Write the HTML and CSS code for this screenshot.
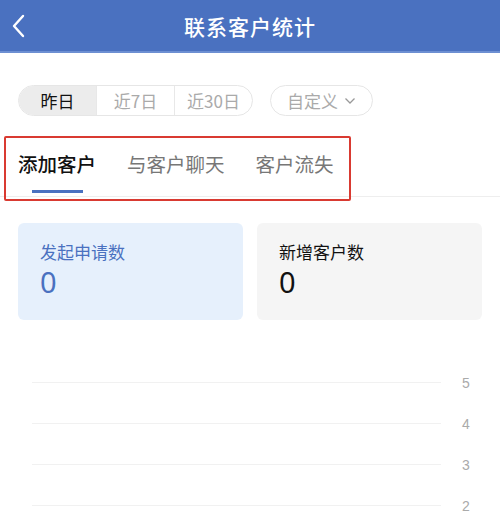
FILE: index.html
```html
<!DOCTYPE html>
<html lang="zh">
<head>
<meta charset="utf-8">
<link rel="stylesheet" href="styles.css">
</head>
<body>
<header class="topbar">
  <svg class="back" width="14" height="24" viewBox="0 0 14 24"><path d="M12 2 L3 12 L12 22" fill="none" stroke="#fff" stroke-width="2.4" stroke-linecap="round" stroke-linejoin="round"/></svg>
  <h1 class="title">联系客户统计</h1>
</header>
<div class="filters">
  <div class="seg">
    <span class="seg-item active">昨日</span>
    <span class="seg-item">近7日</span>
    <span class="seg-item">近30日</span>
  </div>
  <div class="custom">自定义
    <svg width="12" height="8" viewBox="0 0 12 8"><path d="M1.5 1.5 L6 6 L10.5 1.5" fill="none" stroke="#999" stroke-width="1.3"/></svg>
  </div>
</div>
<div class="tabs-wrap">
  <div class="tabs">
    <div class="tab active">添加客户<i class="bar"></i></div>
    <div class="tab">与客户聊天</div>
    <div class="tab">客户流失</div>
  </div>
</div>
<div class="cards">
  <div class="card blue"><div class="label">发起申请数</div><div class="value">0</div></div>
  <div class="card gray"><div class="label">新增客户数</div><div class="value">0</div></div>
</div>
<div class="chart">
  <div class="row"><span class="line"></span><span class="tick">5</span></div>
  <div class="row"><span class="line"></span><span class="tick">4</span></div>
  <div class="row"><span class="line"></span><span class="tick">3</span></div>
  <div class="row"><span class="line"></span><span class="tick">2</span></div>
</div>
</body>
</html>
```
FILE: styles.css
```css
* { box-sizing: border-box; }
html, body { margin: 0; padding: 0; background: #fff; }
body {
  width: 500px; height: 519px; overflow: hidden;
  font-family: "Noto Sans CJK SC", "Noto Sans", sans-serif;
  color: #222;
}
.topbar {
  height: 53px;
  background: #4a71c0;
  border-bottom: 2px solid #6d8fd2;
  position: relative;
  display: flex; align-items: center; justify-content: center;
}
.back { position: absolute; left: 11px; top: 14px; }
.title {
  margin: 0; color: #fff; font-size: 21px; font-weight: 500; letter-spacing: 1px;
}
.filters {
  display: flex; align-items: center; gap: 17px;
  padding: 32px 0 0 18px;
}
.seg {
  display: flex; height: 31px; width: 235px;
  border: 1px solid #e6e6e6; border-radius: 16px; overflow: hidden;
}
.seg-item {
  flex: 1; display: flex; align-items: center; justify-content: center;
  font-size: 17px; color: #aaa;
}
.seg-item + .seg-item { border-left: 1px solid #e8e8e8; }
.seg-item.active { background: #ececec; color: #111; }
.custom {
  height: 31px; width: 103px;
  border: 1px solid #e6e6e6; border-radius: 16px;
  display: flex; align-items: center; justify-content: center; gap: 6px;
  font-size: 17px; color: #aaa;
}
.tabs-wrap {
  margin-top: 20px;
  border-bottom: 1px solid #eee;
  height: 61px;
}
.tabs {
  margin-left: 4px; width: 347px; height: 65px;
  border: 2px solid #d93a31; border-radius: 2px;
  display: flex; gap: 31px; padding-left: 12px;
}
.tab {
  position: relative; font-size: 19.5px; color: #777; padding-top: 11px; white-space: nowrap;
}
.tab.active { color: #111; font-weight: 500; }
.bar {
  position: absolute; left: 14px; top: 52px; width: 51px; height: 3px; background: #4a71c0;
}
.cards {
  display: flex; gap: 14px; padding: 26px 18px 0 18px;
}
.card {
  flex: 1; height: 97px; border-radius: 6px; padding: 14px 22px 0;
}
.card.blue { background: #e6f0fc; color: #4a71c0; }
.card.gray { background: #f5f5f5; color: #111; }
.label { font-size: 17px; line-height: 30px; }
.value { font-size: 29px; line-height: 29px; font-family: "Noto Sans", sans-serif; }
.chart { padding: 42px 0 0 32px; }
.row { display: flex; align-items: center; height: 41px; }
.line { width: 409px; height: 1px; background: #f1f1f1; }
.tick { margin-left: 21px; font-size: 14px; color: #aaa; font-family: "Liberation Sans", sans-serif; }
```
